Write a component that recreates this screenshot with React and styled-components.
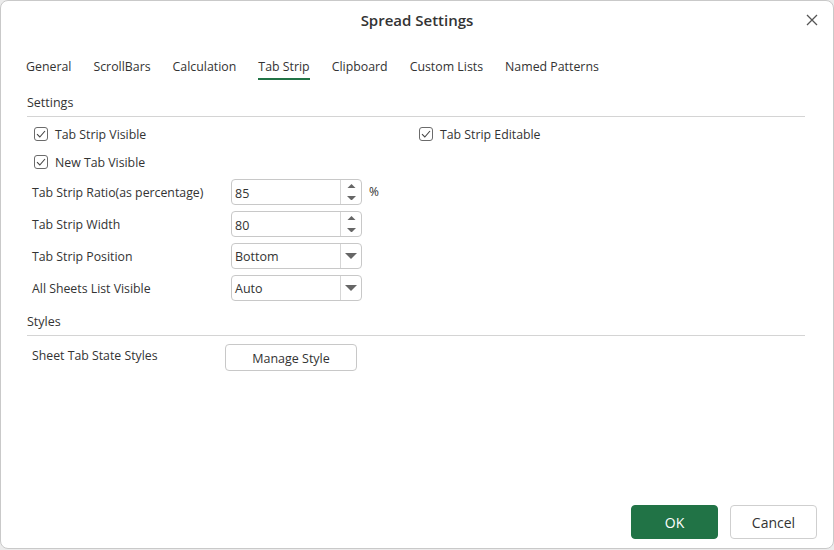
import React, { useState } from 'react';
import styled, { createGlobalStyle } from 'styled-components';

const GlobalStyle = createGlobalStyle`
  html, body {
    margin: 0;
    padding: 0;
    background: #ececec;
  }
  body {
    font-family: "Open Sans", "Noto Sans", Arial, sans-serif;
    color: #333;
  }
`;

const Dialog = styled.div`
  box-sizing: border-box;
  width: 834px;
  height: 549px;
  background: #fff;
  border: 1px solid #c9c9c9;
  border-radius: 8px;
  display: flex;
  flex-direction: column;
`;

const Header = styled.div`
  height: 38px;
  display: grid;
  grid-template-columns: 60px 1fr 60px;
  align-items: center;
`;

const Title = styled.div`
  grid-column: 2;
  text-align: center;
  font-size: 15px;
  font-weight: 600;
  color: #333;
`;

const CloseButton = styled.button`
  justify-self: end;
  margin-right: 12px;
  width: 18px;
  height: 18px;
  padding: 0;
  border: none;
  background: transparent;
  color: #555;
  display: flex;
  align-items: center;
  justify-content: center;
  cursor: pointer;
`;

const TabBar = styled.div`
  display: flex;
  gap: 22px;
  padding-left: 25px;
  margin-top: 19px;
`;

const Tab = styled.div`
  font-size: 12.35px;
  line-height: 18px;
  padding-bottom: 2px;
  border-bottom: 2px solid ${(p) => (p.$active ? '#217346' : 'transparent')};
  color: #333;
  cursor: pointer;
  white-space: nowrap;
`;

const Content = styled.div`
  padding: 0 28px 0 26px;
  flex: 1;
`;

const SectionHeading = styled.div`
  font-size: 12.5px;
  line-height: 18px;
  margin-top: ${(p) => p.$top}px;
  padding-bottom: 4px;
  border-bottom: 1px solid #d4d4d4;
`;

const CheckGrid = styled.div`
  display: grid;
  grid-template-columns: 385px 1fr;
  padding-left: 7px;
  margin-top: 3px;
`;

const CheckRow = styled.label`
  height: 28px;
  display: flex;
  align-items: center;
  gap: 7px;
  font-size: 12.3px;
  cursor: pointer;
`;

const Box = styled.span`
  box-sizing: border-box;
  width: 14px;
  height: 14px;
  border: 1px solid #6b6b6b;
  border-radius: 3px;
  display: flex;
  align-items: center;
  justify-content: center;
`;

const FormRow = styled.div`
  height: 32px;
  display: flex;
  align-items: center;
  padding-left: 5px;
`;

const FieldLabel = styled.div`
  width: ${(p) => p.$width || 199}px;
  font-size: 12.3px;
  margin-top: ${(p) => p.$shift || 0}px;
`;

const Field = styled.div`
  box-sizing: border-box;
  width: 131px;
  height: 26px;
  border: 1px solid #c8c8c8;
  border-radius: 4px;
  display: flex;
  overflow: hidden;
`;

const FieldText = styled.div`
  flex: 1;
  padding-left: 3px;
  font-size: 12.5px;
  display: flex;
  align-items: center;
  padding-top: ${(p) => (p.$low ? 3 : 0)}px;
`;

const Side = styled.div`
  width: 20px;
  border-left: 1px solid #d6d6d6;
  display: flex;
  flex-direction: column;
  align-items: center;
  justify-content: center;
`;

const SpinHalf = styled.div`
  flex: 1;
  display: flex;
  align-items: center;
  justify-content: center;
`;

const Unit = styled.span`
  margin-left: 7px;
  font-size: 12px;
  margin-top: -2px;
`;

const StyleRow = styled.div`
  display: flex;
  align-items: center;
  padding-left: 5px;
  margin-top: 8px;
`;

const ManageButton = styled.button`
  box-sizing: border-box;
  width: 132px;
  height: 27px;
  background: #fff;
  border: 1px solid #c8c8c8;
  border-radius: 4px;
  font-family: inherit;
  font-size: 12.5px;
  color: #333;
  padding-top: 2px;
  cursor: pointer;
`;

const Footer = styled.div`
  display: flex;
  justify-content: flex-end;
  gap: 12px;
  padding: 0 16px 9px 0;
`;

const FooterButton = styled.button`
  box-sizing: border-box;
  width: 87px;
  height: 34px;
  border-radius: 4px;
  font-family: inherit;
  font-size: 14px;
  cursor: pointer;
  border: 1px solid ${(p) => (p.$primary ? '#217346' : '#cfcfcf')};
  background: ${(p) => (p.$primary ? '#217346' : '#fff')};
  color: ${(p) => (p.$primary ? '#fff' : '#333')};
`;

const Check = () => (
  <svg width="10" height="8" viewBox="0 0 10 8">
    <path d="M1 4.2 L3.8 7 L9 1" fill="none" stroke="#444" strokeWidth="1.1" />
  </svg>
);

const Tri = ({ down, size = 5 }) => (
  <svg width={size * 2} height={size} viewBox="0 0 10 5">
    <path d={down ? 'M0 0 H10 L5 5 Z' : 'M0 5 H10 L5 0 Z'} fill="#666" />
  </svg>
);

const CheckItem = ({ label, checked, onToggle }) => (
  <CheckRow onClick={onToggle}>
    <Box>{checked && <Check />}</Box>
    {label}
  </CheckRow>
);

const Spinner = ({ value }) => (
  <Field>
    <FieldText $low>{value}</FieldText>
    <Side>
      <SpinHalf><Tri size={4.5} /></SpinHalf>
      <SpinHalf><Tri down size={4.5} /></SpinHalf>
    </Side>
  </Field>
);

const Select = ({ value }) => (
  <Field>
    <FieldText>{value}</FieldText>
    <Side>
      <Tri down size={6} />
    </Side>
  </Field>
);

const tabs = ['General', 'ScrollBars', 'Calculation', 'Tab Strip', 'Clipboard', 'Custom Lists', 'Named Patterns'];

export default function App() {
  const [active, setActive] = useState('Tab Strip');
  const [checks, setChecks] = useState({ visible: true, editable: true, newTab: true });
  const toggle = (k) => setChecks({ ...checks, [k]: !checks[k] });

  return (
    <>
      <GlobalStyle />
      <Dialog>
        <Header>
          <Title>Spread Settings</Title>
          <CloseButton aria-label="Close">
            <svg width="12" height="12" viewBox="0 0 12 12">
              <path d="M1 1 L11 11 M11 1 L1 11" stroke="#555" strokeWidth="1.3" />
            </svg>
          </CloseButton>
        </Header>
        <TabBar>
          {tabs.map((t) => (
            <Tab key={t} $active={t === active} onClick={() => setActive(t)}>{t}</Tab>
          ))}
        </TabBar>
        <Content>
          <SectionHeading $top={14}>Settings</SectionHeading>
          <CheckGrid>
            <CheckItem label="Tab Strip Visible" checked={checks.visible} onToggle={() => toggle('visible')} />
            <CheckItem label="Tab Strip Editable" checked={checks.editable} onToggle={() => toggle('editable')} />
            <CheckItem label="New Tab Visible" checked={checks.newTab} onToggle={() => toggle('newTab')} />
          </CheckGrid>
          <FormRow>
            <FieldLabel>Tab Strip Ratio(as percentage)</FieldLabel>
            <Spinner value="85" />
            <Unit>%</Unit>
          </FormRow>
          <FormRow>
            <FieldLabel>Tab Strip Width</FieldLabel>
            <Spinner value="80" />
          </FormRow>
          <FormRow>
            <FieldLabel>Tab Strip Position</FieldLabel>
            <Select value="Bottom" />
          </FormRow>
          <FormRow>
            <FieldLabel>All Sheets List Visible</FieldLabel>
            <Select value="Auto" />
          </FormRow>
          <SectionHeading $top={9}>Styles</SectionHeading>
          <StyleRow>
            <FieldLabel $width={193} $shift={-4}>Sheet Tab State Styles</FieldLabel>
            <ManageButton>Manage Style</ManageButton>
          </StyleRow>
        </Content>
        <Footer>
          <FooterButton $primary>OK</FooterButton>
          <FooterButton>Cancel</FooterButton>
        </Footer>
      </Dialog>
    </>
  );
}
